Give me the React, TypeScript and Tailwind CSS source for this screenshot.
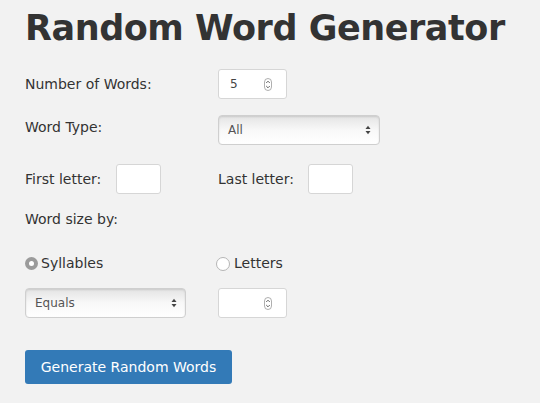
import React from "react";

const font = { fontFamily: '"DejaVu Sans", "Liberation Sans", sans-serif' };

function Spinner() {
  return (
    <svg width="8" height="13" viewBox="0 0 8 13" className="shrink-0" aria-hidden>
      <rect x="0.5" y="0.5" width="7" height="12" rx="3.5" fill="#fff" stroke="#9a9a9a" strokeWidth="0.8" />
      <path d="M2.2 5 L4 3.2 L5.8 5" fill="none" stroke="#555" strokeWidth="0.9" />
      <path d="M2.2 8 L4 9.8 L5.8 8" fill="none" stroke="#555" strokeWidth="0.9" />
    </svg>
  );
}

function NumberBox({ value }: { value?: string }) {
  return (
    <div className="flex h-[30px] w-[69px] items-center justify-between rounded-[3px] border border-[#d6d6d6] bg-white pl-[11px] pr-[14px] text-[12px] text-[#444]">
      <span>{value ?? ""}</span>
      <Spinner />
    </div>
  );
}

function TextBox() {
  return <div className="h-[30px] w-[45px] rounded-[3px] border border-[#d6d6d6] bg-white" />;
}

function SelectBox({ label, w }: { label: string; w: string }) {
  return (
    <div
      className={`flex h-[30px] ${w} items-center justify-between rounded-[4px] border border-[#cfcfcf] bg-gradient-to-b from-[#e4e4e4] via-[#f8f8f8] to-[#ffffff] pl-[9px] pr-[8px] text-[12px] text-[#555] shadow-[inset_0_1px_2px_rgba(0,0,0,0.12)]`}
    >
      <span>{label}</span>
      <svg width="6" height="10" viewBox="0 0 6 10" aria-hidden>
        <path d="M0.5 4 L3 0.8 L5.5 4 Z" fill="#444" />
        <path d="M0.5 6 L3 9.2 L5.5 6 Z" fill="#444" />
      </svg>
    </div>
  );
}

export default function App() {
  return (
    <div className="h-[403px] w-[540px] overflow-hidden bg-[#f2f2f2] text-[#333]" style={font}>
      <div className="pl-[25px] pt-[8px]">
        <h1 className="whitespace-nowrap text-[35px] font-bold leading-[40px] tracking-[-0.45px] text-[#333]">
          Random Word Generator
        </h1>

        <div className="mt-[21px] flex items-center text-[14px]">
          <span className="w-[193px]">Number of Words:</span>
          <NumberBox value="5" />
        </div>

        <div className="mt-[16px] flex items-start text-[14px]">
          <span className="w-[193px] pt-[2px]">Word Type:</span>
          <SelectBox label="All" w="w-[162px]" />
        </div>

        <div className="mt-[19px] flex items-center text-[14px]">
          <span className="w-[91px]">First letter:</span>
          <TextBox />
          <span className="ml-[57px] w-[90px]">Last letter:</span>
          <TextBox />
        </div>

        <div className="mt-[15px] text-[14px] leading-[20px]">Word size by:</div>

        <div className="mt-[24px] flex items-center text-[14px]">
          <label className="flex w-[191px] items-center gap-[3px]">
            <span className="flex h-[13px] w-[13px] items-center justify-center rounded-full bg-[#9b9b9b]">
              <span className="h-[5px] w-[5px] rounded-full bg-white" />
            </span>
            Syllables
          </label>
          <label className="flex items-center gap-[4px]">
            <span className="h-[14px] w-[14px] rounded-full border border-[#b5b5b5] bg-white" />
            Letters
          </label>
        </div>

        <div className="mt-[14px] flex items-center">
          <SelectBox label="Equals" w="w-[161px]" />
          <div className="ml-[32px]">
            <NumberBox />
          </div>
        </div>

        <button className="mt-[32px] h-[34px] w-[207px] rounded-[3px] bg-[#337ab7] text-[14px] text-white">
          Generate Random Words
        </button>
      </div>
    </div>
  );
}
